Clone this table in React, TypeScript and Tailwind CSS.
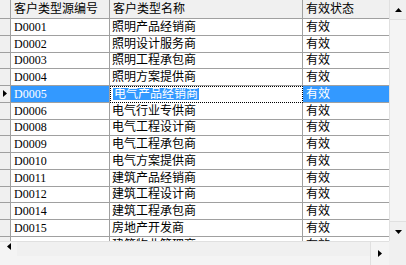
const rows: [string, string, string][] = [
  ["D0001", "照明产品经销商", "有效"],
  ["D0002", "照明设计服务商", "有效"],
  ["D0003", "照明工程承包商", "有效"],
  ["D0004", "照明方案提供商", "有效"],
  ["D0005", "电气产品经销商", "有效"],
  ["D0006", "电气行业专供商", "有效"],
  ["D0008", "电气工程设计商", "有效"],
  ["D0009", "电气工程承包商", "有效"],
  ["D0010", "电气方案提供商", "有效"],
  ["D0011", "建筑产品经销商", "有效"],
  ["D0012", "建筑工程设计商", "有效"],
  ["D0014", "建筑工程承包商", "有效"],
  ["D0015", "房地产开发商", "有效"],
  ["D0016", "建筑物业管理商", "有效"],
];

const selected = 4;

function Arrow({ dir }: { dir: "up" | "down" | "left" | "right" }) {
  const pts = {
    up: "0,4 7,4 3.5,0",
    down: "0,0 7,0 3.5,4",
    left: "4,0 4,7 0,3.5",
    right: "0,0 0,7 4,3.5",
  }[dir];
  const vertical = dir === "up" || dir === "down";
  return (
    <svg width={vertical ? 7 : 4} height={vertical ? 4 : 7}>
      <polygon points={pts} fill="#000" />
    </svg>
  );
}

function Row({ i, code, name, state }: { i: number; code: string; name: string; state: string }) {
  const sel = i === selected;
  return (
    <div className="flex h-[16.75px] shrink-0">
      <div className="w-[11px] shrink-0 bg-[#f0f0f0] border-r border-b border-[#a0a0a0] flex items-center pl-[3px]">
        {sel && <Arrow dir="right" />}
      </div>
      <div
        className={
          "w-[99px] shrink-0 border-r border-b border-[#a0a0a0] pl-[3px] flex items-center leading-none " +
          (sel ? "bg-[#3399ff] text-white" : "bg-white")
        }
      >
        {code}
      </div>
      <div
        className={
          "w-[193px] shrink-0 border-r border-b pl-[2px] flex items-center leading-none bg-white " +
          (sel ? "border-dotted border-black border-t border-l" : "border-[#a0a0a0]")
        }
      >
        {sel ? <span className="bg-[#3399ff] text-white px-px">{name}</span> : name}
      </div>
      <div
        className={
          "w-[86px] shrink-0 border-b border-[#a0a0a0] pl-[3px] flex items-center leading-none " +
          (sel ? "bg-[#3399ff] text-white" : "bg-white")
        }
      >
        {state}
      </div>
    </div>
  );
}

export default function App() {
  return (
    <div className="w-[406px] h-[265px] overflow-hidden bg-[#f0f0f0] text-[12px] text-black font-['Liberation_Serif','Noto_Sans_CJK_SC',serif] flex flex-col">
      <div className="flex h-[241px]">
        {/* grid body */}
        <div className="w-[389px] h-full overflow-hidden bg-white flex flex-col">
          <div className="flex h-[19px] shrink-0 bg-[#f0f0f0]">
            <div className="w-[11px] shrink-0 border-r border-b border-[#a0a0a0]" />
            <div className="w-[99px] shrink-0 border-r border-b border-[#a0a0a0] pl-[3px] flex items-center">
              客户类型源编号
            </div>
            <div className="w-[193px] shrink-0 border-r border-b border-[#a0a0a0] pl-[3px] flex items-center">
              客户类型名称
            </div>
            <div className="w-[86px] shrink-0 border-b border-[#a0a0a0] pl-[3px] flex items-center">
              有效状态
            </div>
          </div>
          {rows.map(([c, n, s], i) => (
            <Row key={c} i={i} code={c} name={n} state={s} />
          ))}
        </div>
        {/* vertical scrollbar */}
        <div className="w-[17px] h-full flex flex-col bg-[#f4f4f4] border-l border-[#e0e0e0]">
          <div className="h-[20px] flex items-center justify-center bg-[#f0f0f0] border-b border-[#e0e0e0]">
            <Arrow dir="up" />
          </div>
          <div className="flex-1" />
          <div className="h-[20px] flex items-center justify-center bg-[#f0f0f0] border-t border-[#e0e0e0]">
            <Arrow dir="down" />
          </div>
        </div>
      </div>
      {/* horizontal scrollbar */}
      <div className="flex flex-1">
        <div className="w-[389px] flex bg-[#f4f4f4] border-t border-[#e0e0e0]">
          <div className="w-[17px] flex items-start pt-[1px] justify-center">
            <Arrow dir="left" />
          </div>
          <div className="flex-1 bg-[#f0f0f0] mb-[9px]" />
          <div className="w-[19px] flex items-center justify-center border-l border-[#e0e0e0]">
            <Arrow dir="right" />
          </div>
        </div>
        <div className="w-[17px] bg-[#f0f0f0]" />
      </div>
    </div>
  );
}
